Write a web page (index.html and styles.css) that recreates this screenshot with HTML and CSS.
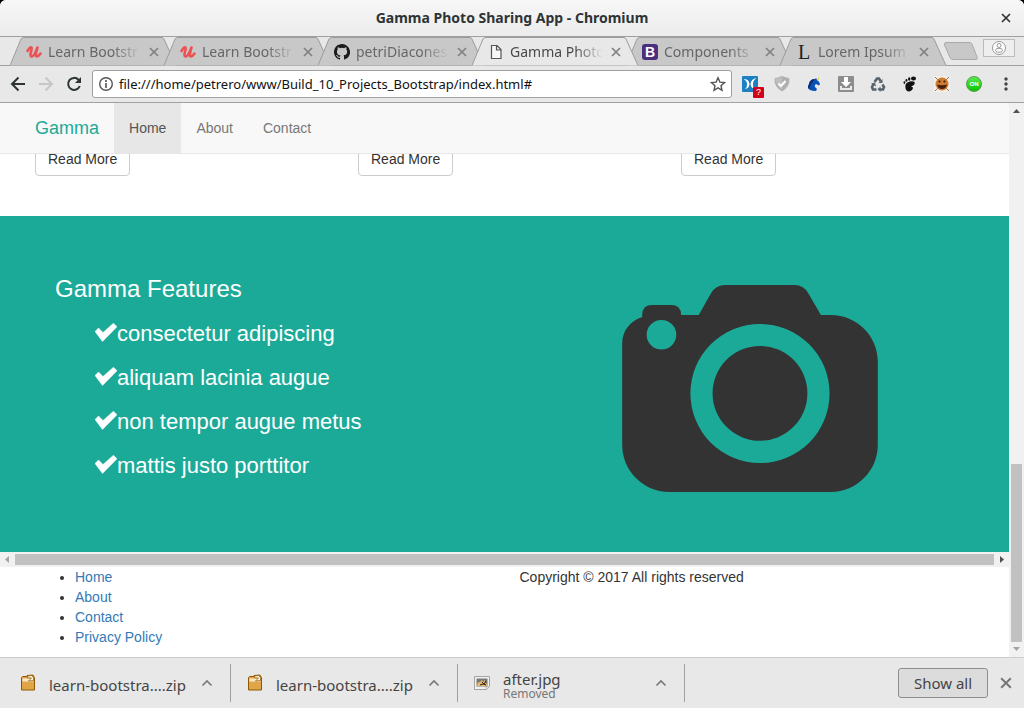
FILE: index.html
```html
<!DOCTYPE html>
<html lang="en">
<head>
<meta charset="utf-8">
<meta name="viewport" content="width=device-width, initial-scale=1">
<title>Gamma Photo Sharing App - Chromium</title>
<link rel="stylesheet" href="styles.css">
</head>
<body>
<svg class="defs" aria-hidden="true">
  <defs>
    <symbol id="close" viewBox="0 0 10 10"><path d="M1 1l8 8M9 1l-8 8" fill="none" stroke="currentColor" stroke-width="1.700"/></symbol>
    <symbol id="udemy" viewBox="0 0 16 14"><path d="M1.500 6C3 3.500 4.500 2 5.500 2.500 7 3 2.500 11 5.500 11.500 8 12 10.500 5 11.500 2.500 10 7 9 11.500 11 11.500c1.500 0 2.500-1.500 3.500-3" fill="none" stroke="#ec5252" stroke-width="2.600" stroke-linecap="round" stroke-linejoin="round"/></symbol>
    <symbol id="tab-shape" viewBox="0 0 166 29" preserveAspectRatio="none"><path d="M0 28.500L11 2Q12 .5 14 .5H152Q153 .5 154 2L166 28.500" stroke="#9c9c9c"/></symbol>
    <symbol id="chevron" viewBox="0 0 12 8"><path d="M1.500 6.500L6 2l4.500 4.500" fill="none" stroke="#777" stroke-width="1.600"/></symbol>
    <symbol id="check" viewBox="0 0 22 19"><path d="M0 8.500L3.500 5 8 9.500 18.500 .2 22 3.800 7.500 18.500Z" fill="#fff" stroke="#fff" stroke-width=".5"/></symbol>
    <symbol id="zip" viewBox="0 0 16 18"><path d="M1.500 3.500l1-1H7V1.500l6-.5 1 2 .5 1v12H1.500z" fill="#dfa552" stroke="#8f5902"/><path d="M2.500 6h11" stroke="#fbe8c5" stroke-width="3"/><path d="M7.500 2l4-.5 2 2v3l-5 .5 3-3-4-.2z" fill="#f9f3df" stroke="#8f5902" stroke-width=".7"/><path d="M2.500 9h11v6h-11z" fill="#e0a545"/></symbol>
  </defs>
</svg>

<div class="window">
  <header class="titlebar">
    <span class="window-title">Gamma Photo Sharing App - Chromium</span>
    <button class="icon-button window-close" aria-label="Close window"><svg width="10" height="10"><use href="#close"/></svg></button>
  </header>

  <div class="tabstrip">
    <div class="tab">
      <svg class="tab-shape" aria-hidden="true"><use href="#tab-shape"/></svg>
      <svg class="favicon" width="16" height="14"><use href="#udemy"/></svg>
      <span class="tab-label">Learn Bootstr</span>
      <button class="icon-button tab-close" aria-label="Close tab"><svg width="10" height="10"><use href="#close"/></svg></button>
    </div>
    <div class="tab">
      <svg class="tab-shape" aria-hidden="true"><use href="#tab-shape"/></svg>
      <svg class="favicon" width="16" height="14"><use href="#udemy"/></svg>
      <span class="tab-label">Learn Bootstr</span>
      <button class="icon-button tab-close" aria-label="Close tab"><svg width="10" height="10"><use href="#close"/></svg></button>
    </div>
    <div class="tab">
      <svg class="tab-shape" aria-hidden="true"><use href="#tab-shape"/></svg>
      <svg class="favicon" width="16" height="16" viewBox="0 0 16 16"><path fill="#1b1b1b" d="M8 0C3.580 0 0 3.580 0 8c0 3.540 2.290 6.530 5.470 7.590.4.070.55-.17.55-.38v-1.490c-2.010.37-2.530-.49-2.690-.94-.09-.23-.48-.94-.82-1.130-.28-.15-.68-.52-.01-.53.63-.01 1.080.58 1.230.82.72 1.210 1.870.87 2.330.66.07-.52.28-.87.51-1.070-1.780-.2-3.640-.89-3.640-3.950 0-.87.31-1.590.82-2.150-.08-.2-.36-1.020.08-2.120 0 0 .67-.21 2.200.82a7.400 7.400 0 0 1 4 0c1.530-1.040 2.200-.82 2.200-.82.44 1.100.16 1.920.08 2.120.51.56.82 1.270.82 2.150 0 3.070-1.870 3.750-3.650 3.950.29.25.54.73.54 1.480v2.200c0 .21.15.46.55.38A8 8 0 0 0 8 0z"/></svg>
      <span class="tab-label">petriDiacones</span>
      <button class="icon-button tab-close" aria-label="Close tab"><svg width="10" height="10"><use href="#close"/></svg></button>
    </div>
    <div class="tab tab-active">
      <svg class="tab-shape" aria-hidden="true"><use href="#tab-shape"/></svg>
      <svg class="favicon" width="16" height="16" viewBox="0 0 16 16"><path d="M3.500 1.500h5.500l4 4v9H3.500zM8.500 1.500V6H13" fill="#f7f7f7" stroke="#555" stroke-width="1.200"/></svg>
      <span class="tab-label">Gamma Photo</span>
      <button class="icon-button tab-close" aria-label="Close tab"><svg width="10" height="10"><use href="#close"/></svg></button>
    </div>
    <div class="tab">
      <svg class="tab-shape" aria-hidden="true"><use href="#tab-shape"/></svg>
      <span class="favicon favicon-bootstrap">B</span>
      <span class="tab-label">Components</span>
      <button class="icon-button tab-close" aria-label="Close tab"><svg width="10" height="10"><use href="#close"/></svg></button>
    </div>
    <div class="tab">
      <svg class="tab-shape" aria-hidden="true"><use href="#tab-shape"/></svg>
      <span class="favicon favicon-lorem">L</span>
      <span class="tab-label">Lorem Ipsum</span>
      <button class="icon-button tab-close" aria-label="Close tab"><svg width="10" height="10"><use href="#close"/></svg></button>
    </div>
    <button class="icon-button new-tab" aria-label="New tab"><svg width="36" height="19" viewBox="0 0 36 19"><path d="M3 .5H26Q28 .5 29 2l5 13q1 2.500-1 2.500H10q-2 0-3-2L1.500 3Q1 .5 3 .5z" fill="#c8c8c8" stroke="#aaa"/></svg></button>
    <button class="profile" aria-label="Profile"><svg width="16" height="16" viewBox="0 0 16 16" fill="#fff" stroke="#999"><circle cx="8" cy="8" r="6.500"/><circle cx="8" cy="5.500" r="2"/><ellipse cx="8" cy="10.300" rx="3.500" ry="2"/></svg></button>
  </div>

  <div class="toolbar">
    <div class="nav-buttons">
      <button class="icon-button" aria-label="Back"><svg width="16" height="16" viewBox="0 0 16 16"><path d="M15 8H2M8.500 1.500L2 8l6.500 6.500" fill="none" stroke="#2e3436" stroke-width="2"/></svg></button>
      <button class="icon-button" aria-label="Forward"><svg width="16" height="16" viewBox="0 0 16 16"><path d="M1 8h13M7.500 1.500L14 8l-6.500 6.500" fill="none" stroke="#c6c6c6" stroke-width="2"/></svg></button>
      <button class="icon-button" aria-label="Reload"><svg width="16" height="16" viewBox="0 0 16 16"><path d="M13.800 10A6 6 0 1 1 12.500 3.700L14 5.500" fill="none" stroke="#2e3436" stroke-width="2"/><path d="M15 1v6H9z" fill="#2e3436"/></svg></button>
    </div>
    <div class="address">
      <svg width="16" height="16" viewBox="0 0 16 16"><circle cx="8" cy="8" r="6.300" fill="none" stroke="#555" stroke-width="1.400"/><path d="M8 4v2M8 7v5" stroke="#555" stroke-width="1.600"/></svg>
      <input class="address-input" type="text" aria-label="Address" value="file:///home/petrero/www/Build_10_Projects_Bootstrap/index.html#">
      <button class="icon-button" aria-label="Bookmark"><svg width="16" height="16" viewBox="0 0 16 16"><path d="M8 1.800l1.900 4.300 4.600.5-3.500 3.100 1 4.600L8 11.900l-4 2.400 1-4.600L1.500 6.600l4.600-.5z" fill="none" stroke="#555" stroke-width="1.400"/></svg></button>
    </div>
    <div class="extensions">
      <button class="icon-button ext-flagged" aria-label="Extension"><svg width="16" height="16" viewBox="0 0 16 16"><rect width="16" height="16" rx="1" fill="#1d7fc4"/><path d="M1.500 3Q7 3 7.500 8 7 12.500 3 13q2.500-2 2-5Q5 5 1.500 3zM14.500 2Q9 3 8.500 8 9 12.500 13 13q-2.500-2-2-5 0-3.500 3.500-6z" fill="#fff"/></svg><span class="badge">?</span></button>
      <button class="icon-button" aria-label="Shield"><svg width="16" height="16" viewBox="0 0 16 16"><path d="M8 0l7.500 2.500Q16 11 8 15.500 0 11 .5 2.500z" fill="#b0b0b0"/><path d="M8 1v13Q2 10 1.500 3z" fill="#bebebe"/><path d="M4.500 7.500L7 10l4.500-5" fill="none" stroke="#fff" stroke-width="2"/></svg></button>
      <button class="icon-button" aria-label="Unicorn"><svg width="16" height="16" viewBox="0 0 16 16"><path d="M4 14Q1 12 3 8 4 3 9 3l1-1 1 2q2 1 3 4l-1 1.500L10 8q-2 1-1 3l2 2-1 2Q6 15 4 14z" fill="#0751b5"/><path d="M3 13Q1 12 3 8 4 3 9 3L5 8l-1 3z" fill="#102a68"/><path d="M11 4l2.500-3.500L12 5z" fill="#f2c300"/></svg></button>
      <button class="icon-button" aria-label="Downloader"><svg width="16" height="16" viewBox="0 0 16 16"><rect width="16" height="16" rx="1" fill="#8d8d8d"/><path d="M6 1h4v5h3l-5 5-5-5h3z" fill="#fff"/><path d="M2 10h2v2h8v-2h2v4H2z" fill="#e9e9e9"/></svg></button>
      <button class="icon-button" aria-label="Recycle"><svg width="16" height="16" viewBox="0 0 16 16" fill="none" stroke="#59636b" stroke-width="2.600"><path d="M4.500 6L7 2.500h2L10.500 5M3.500 8L2 11l1 2.500H6.500M12.500 8.500l1.500 2.500-1 2.500h-3"/><path d="M12.500 3v4H8.500zM10.500 10.500v5.500l-3-2.700zM1 7.500L5 6.500l1 4z" fill="#59636b" stroke="none"/></svg></button>
      <button class="icon-button" aria-label="Gnome"><svg width="16" height="16" viewBox="0 0 16 16" fill="#111"><path d="M8 5.500c6-1.500 6 3 2 4.500-2 1 1 .5 1 2-1 4-7 5-7.500 0C3 8 4 6.500 8 5.500z"/><ellipse cx="11.500" cy="2.500" rx="2.500" ry="2"/><ellipse cx="7.200" cy="3" rx="1.200" ry="1.700"/><ellipse cx="4.400" cy="4.400" rx="1" ry="1.400"/><ellipse cx="2.400" cy="6.600" rx=".9" ry="1.300"/></svg></button>
      <button class="icon-button" aria-label="Cookie"><svg width="16" height="16" viewBox="0 0 16 16"><path d="M0 0h16v16H0z" fill="#f5eee5"/><path d="M1 1l14 14M15 1L1 15" stroke="#777"/><circle cx="8" cy="8" r="6.500" fill="#d07c30"/><path d="M3 8.500q5 1.500 10 0-1 4.500-5 4.500T3 8.500z" fill="#47220e"/><circle cx="5.500" cy="5.500" r="1.100" fill="#391b0c"/><circle cx="10.500" cy="5.500" r="1.100" fill="#391b0c"/></svg></button>
      <button class="icon-button ext-on" aria-label="Toggle">ON</button>
      <button class="icon-button" aria-label="Menu"><svg width="16" height="16" viewBox="0 0 16 16" fill="#444"><circle cx="8" cy="3" r="1.700"/><circle cx="8" cy="8" r="1.700"/><circle cx="8" cy="13" r="1.700"/></svg></button>
    </div>
  </div>

  <div class="viewport">
    <div class="page">
      <nav class="navbar">
        <a class="brand" href="#">Gamma</a>
        <a class="nav-link nav-link-active" href="#">Home</a>
        <a class="nav-link" href="#">About</a>
        <a class="nav-link" href="#">Contact</a>
      </nav>

      <section class="cards">
        <div class="card"><button class="read-more">Read More</button></div>
        <div class="card"><button class="read-more">Read More</button></div>
        <div class="card"><button class="read-more">Read More</button></div>
      </section>

      <section class="features">
        <div class="features-text">
          <h3 class="features-title">Gamma Features</h3>
          <ul class="feature-list">
            <li><svg class="check" width="22" height="19"><use href="#check"/></svg>consectetur adipiscing</li>
            <li><svg class="check" width="22" height="19"><use href="#check"/></svg>aliquam lacinia augue</li>
            <li><svg class="check" width="22" height="19"><use href="#check"/></svg>non tempor augue metus</li>
            <li><svg class="check" width="22" height="19"><use href="#check"/></svg>mattis justo porttitor</li>
          </ul>
        </div>
        <svg class="camera" width="256" height="207" viewBox="33 30 768 622" role="img" aria-label="Camera">
          <path fill="#333" fill-rule="evenodd" d="M93 126V120Q93 90 123 90H180Q210 90 210 120H263L299 56Q313 30 343 30H551Q579 30 593 56L630 120H660C738 120 801 183 801 260V511C801 588 738 652 660 652H174C96 652 33 588 33 511V206C33 168 57 137 93 126ZM151 135A44.500 44.500 0 1 0 151 224 44.500 44.500 0 1 0 151 135ZM447 147A209 209 0 1 0 447 565 209 209 0 1 0 447 147ZM447 213A142 142 0 1 1 447 498 142 142 0 1 1 447 213Z"/>
        </svg>
      </section>

      <div class="scroll-x" aria-hidden="true">
        <svg width="15" height="15"><path d="M9 4v7L5 7.500z" fill="#a3a3a3"/></svg>
        <div class="scroll-x-thumb"></div>
        <svg width="15" height="15"><path d="M6 4v7l4-3.500z" fill="#505050"/></svg>
      </div>

      <footer class="footer">
        <ul class="footer-links">
          <li><a href="#">Home</a></li>
          <li><a href="#">About</a></li>
          <li><a href="#">Contact</a></li>
          <li><a href="#">Privacy Policy</a></li>
        </ul>
        <p class="copyright">Copyright © 2017 All rights reserved</p>
      </footer>
    </div>

    <div class="scroll-y" aria-hidden="true">
      <svg width="15" height="15"><path d="M4 10h7L7.500 6z" fill="#505050"/></svg>
      <div class="scroll-y-thumb"></div>
      <svg width="15" height="15"><path d="M4 5h7L7.500 9z" fill="#a3a3a3"/></svg>
    </div>
  </div>

  <div class="downloads">
    <div class="download">
      <svg class="file-icon" width="16" height="18"><use href="#zip"/></svg>
      <span class="file-name">learn-bootstra....zip</span>
      <button class="icon-button" aria-label="Options"><svg width="12" height="8"><use href="#chevron"/></svg></button>
    </div>
    <div class="download">
      <svg class="file-icon" width="16" height="18"><use href="#zip"/></svg>
      <span class="file-name">learn-bootstra....zip</span>
      <button class="icon-button" aria-label="Options"><svg width="12" height="8"><use href="#chevron"/></svg></button>
    </div>
    <div class="download">
      <svg class="file-icon" width="16" height="16" viewBox="0 0 16 16"><path d="M.5 1.500h15v10l-3 3H.5z" fill="#f2f2ee" stroke="#a3a39f"/><path d="M2.500 3.500h11v8h-11z" fill="#777a7a"/><path d="M3 11q0-4 3-4l2-2 1 2 2-2v3q2 0 2 3z" fill="#e9b86a"/><path d="M8 7l2 2 2-3M6 10l3-1 3 1" stroke="#2d2418" fill="none"/><path d="M12 15v-3h3z" fill="#fff" stroke="#999" stroke-width=".6"/></svg>
      <span class="file-name file-name-stacked">after.jpg<small class="file-status">Removed</small></span>
      <button class="icon-button" aria-label="Options"><svg width="12" height="8"><use href="#chevron"/></svg></button>
    </div>
    <div class="downloads-actions">
      <button class="show-all">Show all</button>
      <button class="icon-button shelf-close" aria-label="Close downloads"><svg width="12" height="12"><use href="#close"/></svg></button>
    </div>
  </div>
</div>
</body>
</html>
```
FILE: styles.css
```css
* { box-sizing: border-box; }

body {
  margin: 0;
  background: #000;
  color: #333;
  font: 14px/20px "Liberation Sans", Arial, sans-serif;
}

svg { display: block; flex: none; }
button, input { font: inherit; color: inherit; }
a { text-decoration: none; }
.defs { position: absolute; width: 0; height: 0; }

.icon-button {
  display: flex;
  align-items: center;
  justify-content: center;
  flex: none;
  padding: 0;
  border: 0;
  background: none;
}

.window {
  display: flex;
  flex-direction: column;
  height: 100vh;
  overflow: hidden;
  border-radius: 6px 6px 0 0;
  background: #e8e8e8;
}

/* Title bar */
.titlebar {
  display: grid;
  grid-template-columns: 1fr auto 1fr;
  align-items: center;
  height: 37px;
  flex: none;
  padding: 0 13px;
  border-bottom: 1px solid #a0a0a0;
  background: linear-gradient(#f7f7f7, #ececec);
  color: #2e3436;
  font-family: "Noto Sans", sans-serif;
}
.window-title { grid-column: 2; font-size: 14px; font-weight: 700; }
.window-close { justify-self: end; }

/* Tabs */
.tabstrip {
  display: flex;
  height: 29px;
  flex: none;
  padding-left: 10px;
  border-bottom: 1px solid #a0a0a0;
  font-family: "Noto Sans", sans-serif;
}
.tab {
  position: relative;
  display: flex;
  align-items: center;
  flex: 0 1 166px;
  min-width: 0;
  height: 29px;
  margin-right: -12px;
  padding: 0 17px 0 16px;
  color: #666;
}
.tab-active { z-index: 1; color: #4a4a4a; }
.tab-shape {
  position: absolute;
  inset: 0;
  width: 100%;
  height: 100%;
  fill: #c8c8c8;
}
.tab-active .tab-shape { fill: #e8e8e8; }
.favicon { position: relative; flex: none; width: 16px; margin-right: 6px; }
.favicon-bootstrap {
  height: 16px;
  border-radius: 3px;
  background: #4b2f7f;
  color: #fff;
  font: 700 14px/16px "Liberation Sans", sans-serif;
  text-align: center;
}
.favicon-lorem {
  color: #222;
  font: 20px/20px "Liberation Serif", serif;
  text-align: center;
}
.tab-label {
  position: relative;
  flex: 1;
  min-width: 0;
  overflow: hidden;
  margin-right: 8px;
  font-size: 14px;
  white-space: nowrap;
  -webkit-mask-image: linear-gradient(90deg, #000 70%, transparent);
  mask-image: linear-gradient(90deg, #000 70%, transparent);
}
.tab-close { position: relative; color: #808080; }
.new-tab { align-self: center; margin-left: 9px; }
.profile {
  display: flex;
  align-items: center;
  justify-content: center;
  width: 32px;
  height: 18px;
  margin: 2px 9px 0 auto;
  padding: 0;
  border: 1px solid #bbb;
  background: #eee;
}

/* Toolbar */
.toolbar {
  display: flex;
  align-items: center;
  height: 37px;
  flex: none;
  padding: 0 10px;
  border-bottom: 1px solid #a0a0a0;
}
.nav-buttons { display: flex; gap: 12px; }
.address {
  display: flex;
  align-items: center;
  flex: 1;
  gap: 5px;
  min-width: 0;
  height: 28px;
  margin: 0 10px;
  padding: 0 5px;
  border: 1px solid #a0a0a0;
  border-radius: 3px;
  background: #fff;
}
.address-input {
  flex: 1;
  min-width: 0;
  padding: 0;
  border: 0;
  background: none;
  color: #111;
  font: 13px/20px "Noto Sans", sans-serif;
}
.extensions { display: flex; align-items: center; gap: 16px; }
.ext-flagged { position: relative; }
.badge {
  position: absolute;
  left: 11px;
  top: 11px;
  width: 11px;
  height: 11px;
  border-radius: 1px;
  background: #d0021b;
  color: #fff;
  font: 9px/11px "Liberation Sans", sans-serif;
  text-align: center;
}
.ext-on {
  width: 16px;
  height: 16px;
  border: 1px solid #52a044;
  border-radius: 50%;
  background: linear-gradient(#5be850, #0bc400);
  color: #fff;
  font: 700 6px/14px "Liberation Sans", sans-serif;
}

/* Page area */
.viewport { display: flex; flex: 1; min-height: 0; background: #fff; }
.page { flex: 1; min-width: 0; overflow: hidden; }

.navbar {
  position: relative;
  z-index: 1;
  display: flex;
  height: 51px;
  padding-left: 20px;
  border-bottom: 1px solid #e7e7e7;
  background: #f8f8f8;
  line-height: 50px;
}
.brand { padding: 0 15px; color: #1caa98; font-size: 18px; }
.nav-link { padding: 0 15px; color: #777; }
.nav-link-active { background: #e7e7e7; color: #555; }

/* The card row is scrolled partly under the fixed navbar */
.cards {
  display: grid;
  grid-template-columns: repeat(3, 1fr);
  margin-top: -12px;
  padding: 0 20px 40px;
}
.card { padding: 0 15px; }
.read-more {
  display: block;
  height: 34px;
  padding: 0 12px;
  border: 1px solid #ccc;
  border-radius: 4px;
  background: #fff;
}

.features {
  display: grid;
  grid-template-columns: 1fr 1fr;
  padding: 60px 18px 60px 25px;
  background: #1caa98;
  color: #fff;
}
.features-text { padding: 0 0 4px 30px; }
.features-title { margin: 0 0 10px; font-size: 24px; font-weight: 400; line-height: 26px; }
.feature-list {
  margin: 0;
  padding-left: 40px;
  list-style: none;
  font-size: 22px;
  line-height: 44px;
}
.feature-list li { display: flex; align-items: center; }
.check { margin-bottom: 4px; }
.camera { justify-self: center; align-self: end; }

.scroll-x { display: flex; align-items: center; height: 15px; background: #f1f1f1; }
.scroll-x-thumb { flex: 1; height: 11px; background: #c1c1c1; }

.footer {
  display: grid;
  grid-template-columns: 1fr 1fr;
  padding: 0 20px 10px;
}
.footer-links { margin: 0; padding-left: 55px; }
.footer-links a { color: #337ab7; }
.copyright { margin: 0; padding: 0 15px; }

.scroll-y {
  display: flex;
  flex-direction: column;
  align-items: center;
  flex: none;
  width: 15px;
  background: #f1f1f1;
}
.scroll-y-thumb { width: 11px; height: 178px; margin-top: auto; background: #c1c1c1; }

/* Download shelf */
.downloads {
  display: flex;
  align-items: center;
  height: 51px;
  flex: none;
  border-top: 1px solid #ccc;
  color: #444;
  font-family: "Noto Sans", sans-serif;
}
.download {
  display: flex;
  align-items: center;
  flex: 0 1 227px;
  min-width: 0;
  height: 38px;
  padding: 0 17px 0 16px;
  border-right: 1px solid #a0a0a0;
}
.download:first-child { flex-basis: 231px; padding-left: 20px; }
.file-icon { margin-right: 13px; }
.file-name { flex: 1; min-width: 0; padding-top: 4px; font-size: 15px; white-space: nowrap; }
.file-name-stacked { padding-top: 6px; line-height: 16px; }
.file-status { display: block; color: #777; font-size: 12px; line-height: 14px; }
.downloads-actions { display: flex; align-items: center; gap: 12px; margin-left: auto; padding-right: 12px; }
.show-all {
  width: 90px;
  height: 30px;
  padding: 0;
  border: 1px solid #8c8f8c;
  border-radius: 3px;
  background: #dcdcdc;
  font-size: 15px;
}
.shelf-close { color: #777; }
```
